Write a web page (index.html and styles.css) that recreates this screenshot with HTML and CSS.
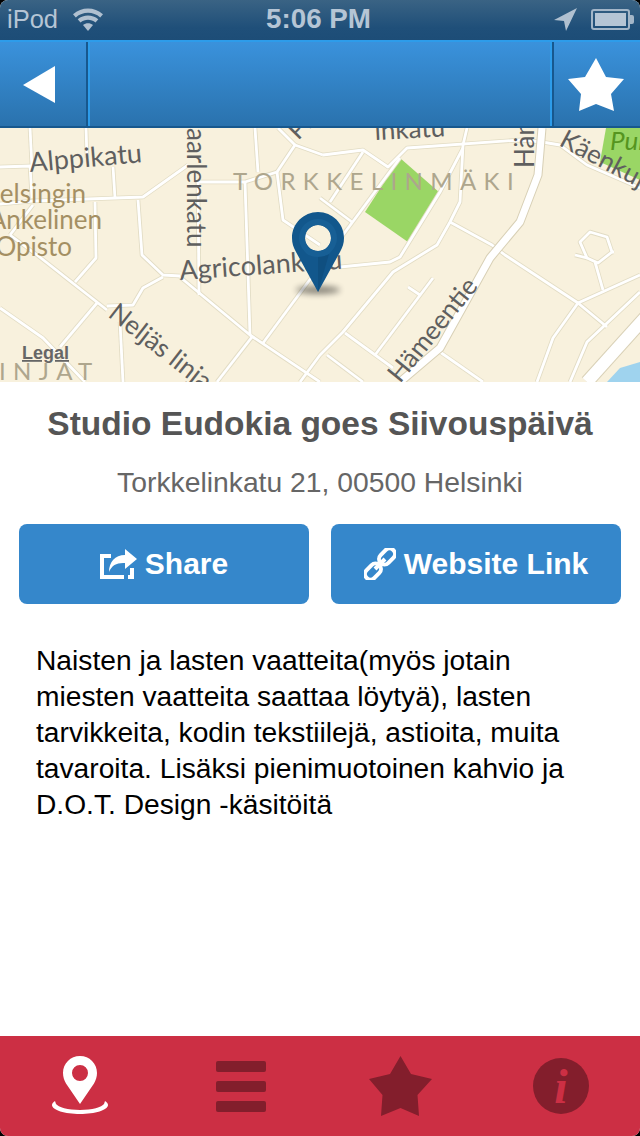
FILE: index.html
```html
<!DOCTYPE html>
<html lang="fi">
<head>
<meta charset="utf-8">
<title>Studio Eudokia goes Siivouspäivä</title>
<link rel="stylesheet" href="styles.css">
</head>
<body>
<div class="screen">
  <header class="status">
    <div class="status-left">
      <span>iPod</span>
      <svg class="wifi" viewBox="0 0 30 23" width="30" height="23"><path d="M15 23l-5-6c3-2.400 7-2.400 10 0z"/><path d="M7.500 14.500l-2.800-3.200c6-5 14.600-5 20.600 0l-2.800 3.200c-4.400-3.600-10.600-3.600-15 0z"/><path d="M2.800 9.500L0 6.300c8.600-7.800 21.400-7.800 30 0l-2.800 3.200c-7-6.200-17.400-6.200-24.400 0z"/></svg>
    </div>
    <span class="time">5:06 PM</span>
    <div class="status-right">
      <svg class="arrow" viewBox="0 0 23 23" width="23" height="23"><path d="M23 0L0 12l10 1 2 10z"/></svg>
      <div class="battery"><div class="battery-fill"></div></div>
      <div class="battery-nib"></div>
    </div>
  </header>

  <nav class="navbar">
    <button class="nav-btn back" aria-label="Back">
      <svg viewBox="0 0 32 37" width="32" height="37"><path d="M32 0v37L0 19z"/></svg>
    </button>
    <div class="nav-title"></div>
    <button class="nav-btn fav" aria-label="Favourite">
      <svg viewBox="0 0 56 53" width="56" height="53"><path d="M28 0l10 19 18 2-13 15 3 17-18-7-17 7 2-17L0 21l17-2z"/></svg>
    </button>
  </nav>

  <svg class="map" viewBox="0 0 640 254" width="640" height="254" role="img">
    <defs>
      <g id="roads">
        <polyline points="0,39 30,38 32,70"/>
        <polyline points="30,0 32,40"/>
        <polyline points="86,0 87,30"/>
        <polyline points="0,76 33,73 143,69 188,37"/>
        <polyline points="113,39 115,70"/>
        <polyline points="95,74 96,130 75,154"/>
        <polyline points="138,72 142,127 163,147 180,148"/>
        <polyline points="163,149 143,160 133,177 107,178"/>
        <polyline points="10,107 37,127 107,182"/>
        <polyline points="180,149 250,207 320,254"/>
        <polyline points="198,54 199,167"/>
        <polyline points="198,54 245,54 277,44"/>
        <polyline points="245,54 250,207"/>
        <polyline points="277,44 283,92 320,117"/>
        <polyline points="255,0 258,44"/>
        <polyline points="277,44 295,17 323,27"/>
        <polyline points="278,0 295,17"/>
        <polyline points="263,215 400,30"/>
        <polyline points="252,209 217,254"/>
        <polyline points="0,180 43,210 85,254"/>
        <polyline points="97,175 60,219"/>
        <polyline points="120,194 123,254"/>
        <polyline points="33,77 10,107"/>
        <polyline points="323,27 363,22 388,39 407,20 520,12 542,14 560,17 587,37 640,60"/>
        <polyline points="363,24 330,74"/>
        <polyline points="467,0 463,17 460,74 450,94 437,117 393,144 343,204 320,227 300,254"/>
        <polyline points="463,20 440,64 400,129 390,134 340,139"/>
        <polyline points="450,94 492,117 505,127 578,175 607,199"/>
        <polyline points="578,175 553,210 537,254"/>
        <polyline points="578,175 640,147"/>
        <polyline points="603,162 595,134"/>
        <polygon points="590,104 607,109 612,124 598,135 587,130 580,114"/>
        <polyline points="575,127 587,130"/>
        <polyline points="612,124 614,124"/>
        <polyline points="433,150 375,227"/>
        <polyline points="408,159 420,167"/>
        <polyline points="345,205 393,240"/>
        <polyline points="327,227 363,254"/>
        <polyline points="440,224 483,254"/>
        <polyline points="640,164 587,214 570,254"/>
        <polyline points="320,70 352,94"/>
      </g>
    </defs>
    <rect class="land" width="640" height="254"/>
    <polygon class="park" points="400,30 440,65 408,114 365,84"/>
    <polygon class="park" points="606,0 640,0 640,52 600,34"/>
    <polygon class="water" points="607,254 620,240 640,234 640,254"/>
    <use href="#roads" class="casing"/>
    <use href="#roads" class="road"/>
    <polyline class="major-case" points="542,0 538,47 520,94 490,130 440,220 400,254"/>
    <polyline class="major" points="542,0 538,47 520,94 490,130 440,220 400,254"/>
    <polyline class="major-case wide" points="650,184 587,254"/>
    <polyline class="major wide" points="650,184 587,254"/>

    <text class="district" x="233" y="62">TORKKELINMÄKI</text>
    <text class="district" x="-1" y="252">INJAT</text>
    <text class="street" transform="translate(30 44) rotate(-5)">Alppikatu</text>
    <text class="poi" x="86" y="75" text-anchor="end">Helsingin</text>
    <text class="poi" x="102" y="101" text-anchor="end">Ankelinen</text>
    <text class="poi" x="72" y="128" text-anchor="end">Opisto</text>
    <text class="street-sm" transform="translate(187 0) rotate(90)">aarlenkatu</text>
    <text class="street" transform="translate(180 152) rotate(-4)">Agricolankatu</text>
    <text class="street-sm" transform="translate(107 188) rotate(38)">Neljäs linja</text>
    <text class="street-sm" transform="translate(400 256) rotate(-51)">Hämeentie</text>
    <text class="street-sm" transform="translate(534 40) rotate(-90)">Häm</text>
    <text class="street-sm" transform="translate(558 17) rotate(28)">Käenkuja</text>
    <text class="street-sm" transform="translate(298 13) rotate(-45)">Pi</text>
    <text class="street-sm" transform="translate(375 12) rotate(-3)">inkatu</text>
    <text class="park-label" x="610" y="22">Puisto</text>
    <text class="legal" x="22" y="231">Legal</text>

    <ellipse class="pin-shadow" cx="318" cy="162" rx="22" ry="4"/>
    <path class="pin-outer" fill-rule="evenodd" d="M318 84c14.400 0 26 11.600 26 26 0 5-1.400 9.400-4 14l-22 40-22-40c-2.600-4.600-4-9-4-14 0-14.400 11.600-26 26-26zm0 13a13 13 0 1 0 0 26 13 13 0 0 0 0-26z"/>
    <path class="pin-inner" fill-rule="evenodd" d="M318 91a19 19 0 0 1 19 19c0 7-4 12-8 16-3 2-7 3-11 3s-8-1-11-3c-4-4-8-9-8-16a19 19 0 0 1 19-19zm0 6a13 13 0 1 0 0 26 13 13 0 0 0 0-26z"/>
    <path class="pin-tip" d="M318 129c4 0 8-1 11-3l-11 38z"/>
  </svg>

  <main class="details">
    <h1 class="title">Studio Eudokia goes Siivouspäivä</h1>
    <p class="address">Torkkelinkatu 21, 00500 Helsinki</p>
    <div class="actions">
      <a class="action">
        <svg viewBox="0 0 37 30" width="37" height="30"><path class="stroke-icon" d="M24 28H2V7h9M32 19v9h-4"/><path d="M25 0l12 10-12 10v-6c-8-.500-13 2-16 9 0-10 6-17 16-17z"/></svg>
        <span>Share</span>
      </a>
      <a class="action">
        <svg viewBox="0 0 32 32" width="32" height="32"><g class="stroke-icon"><rect x="14" y="3" width="18" height="11" rx="5.500" transform="rotate(-45 23 8.500)"/><rect x="0" y="18" width="18" height="11" rx="5.500" transform="rotate(-45 9 23.500)"/><path d="M11 21l10-10"/></g></svg>
        <span>Website Link</span>
      </a>
    </div>
    <p class="description">Naisten ja lasten vaatteita(myös jotain miesten vaatteita saattaa löytyä), lasten tarvikkeita, kodin tekstiilejä, astioita, muita tavaroita. Lisäksi pienimuotoinen kahvio ja D.O.T. Design -käsitöitä</p>
  </main>

  <footer class="tabbar">
    <div class="tab">
      <svg class="tab-active" viewBox="0 0 56 60" width="56" height="60"><path fill-rule="evenodd" d="M28 0c9.500 0 17 7.500 17 17 0 4-1.200 7-3 10.500L28 48 14 27.500C12.200 24 11 21 11 17 11 7.500 18.500 0 28 0zm0 9a8 8 0 1 0 0 16 8 8 0 0 0 0-16z"/><path d="M3 45c-2 1-3 3-3 4 0 5 13 9 28 9s28-4 28-9c0-1-1-3-3-4l-1 3c-2 3-12 6-24 6s-22-3-24-6z"/></svg>
    </div>
    <div class="tab">
      <div class="menu-icon"><i></i><i></i><i></i></div>
    </div>
    <div class="tab">
      <svg class="tab-dim" viewBox="0 0 63 60" width="63" height="60"><path d="M31.500 0l10.500 18 21 5-14.500 16L50 60l-18.500-8L12 60l1.500-21L0 23l21-5z"/></svg>
    </div>
    <div class="tab">
      <div class="info-icon">i</div>
    </div>
  </footer>
</div>
</body>
</html>
```

FILE: styles.css
```css
* { box-sizing: border-box; }
html, body { margin: 0; padding: 0; background: #000; }
.screen {
  width: 640px;
  height: 1136px;
  display: flex;
  flex-direction: column;
  overflow: hidden;
  border-radius: 8px;
  background: #fff;
  font-family: "Liberation Sans", Arial, sans-serif;
}

/* status bar */
.status {
  height: 40px;
  display: grid;
  grid-template-columns: 1fr auto 1fr;
  align-items: center;
  padding: 0 6px 2px 7px;
  background: linear-gradient(#3a6384, #1f4f79 70%, #1d4d77);
  color: #b5c5d5;
  font-size: 25.500px;
}
.status-left { display: flex; align-items: center; gap: 15px; }
.wifi, .arrow { fill: #b0c0d0; display: block; }
.time { font-weight: bold; font-size: 27.800px; padding-right: 4px; }
.status-right { display: flex; align-items: center; justify-content: flex-end; }
.arrow { margin-right: 14px; }
.battery {
  width: 39px;
  height: 21px;
  border: 2px solid #a3b6c8;
  border-radius: 3px;
  padding: 2px;
}
.battery-fill { height: 100%; background: #b5c5d5; }
.battery-nib { width: 4px; height: 9px; background: #a3b6c8; border-radius: 0 2px 2px 0; }

/* navigation bar */
.navbar {
  height: 88px;
  display: flex;
  background: linear-gradient(#3a92dc, #2a72ad);
  border-top: 2px solid #2d9cea;
  border-bottom: 2px solid #17588e;
}
.nav-btn {
  border: 0;
  background: none;
  padding: 0;
  display: flex;
  align-items: center;
  flex: none;
}
.nav-btn svg { fill: #fff; display: block; }
.back {
  width: 90px;
  padding-left: 23px;
  border-right: 2px solid #2d9cea;
  box-shadow: inset -2px 0 0 #17588e;
}
.fav {
  width: 90px;
  padding-left: 16px;
  border-left: 2px solid #2d9cea;
  box-shadow: inset 2px 0 0 #17588e;
}
.nav-title { flex: 1; }

/* map */
.map { display: block; flex: none; }
.land { fill: #f8f1dd; }
.park { fill: #9ad665; }
.water { fill: #9fd3ee; }
.casing { fill: none; stroke: #e2dcc4; stroke-width: 4.500px; stroke-linejoin: round; }
.road { fill: none; stroke: #fff; stroke-width: 2.800px; stroke-linejoin: round; }
.major-case { fill: none; stroke: #d8d0b6; stroke-width: 9px; stroke-linejoin: round; }
.major { fill: none; stroke: #fff; stroke-width: 7px; stroke-linejoin: round; }
.major-case.wide { stroke-width: 14px; }
.major.wide { stroke-width: 12px; }
.street { font: 27px Lato, sans-serif; fill: #5f5f5f; }
.street-sm { font: 26px Lato, sans-serif; fill: #5f5f5f; }
.poi { font: 26px Lato, sans-serif; fill: #a48f63; }
.district { font: 24px Lato, sans-serif; fill: #aea68d; letter-spacing: 7.400px; }
.park-label { font: italic 26px Lato, sans-serif; fill: #55951f; }
.legal {
  font: bold 18px "Liberation Sans", sans-serif;
  fill: #666;
  text-decoration: underline;
}
.pin-shadow { fill: #000; opacity: .45; filter: blur(3px); }
.pin-outer { fill: #12578c; }
.pin-inner { fill: #175f95; }
.pin-tip { fill: #0f4f80; }

/* details */
.details { flex: 1; display: flex; flex-direction: column; padding-top: 22px; }
.title {
  margin: 0;
  text-align: center;
  font-size: 33.500px;
  line-height: 40px;
  font-weight: bold;
  color: #555;
}
.address {
  margin: 20px 0 0;
  text-align: center;
  font-size: 28.300px;
  line-height: 36px;
  color: #666;
}
.actions {
  display: flex;
  gap: 22px;
  margin: 24px 19px 0;
}
.action {
  flex: 1;
  height: 80px;
  display: flex;
  align-items: center;
  justify-content: center;
  gap: 8px;
  border-radius: 8px;
  background: #3587cb;
  color: #fff;
  font-size: 30px;
  font-weight: bold;
}
.action svg { fill: #fff; display: block; flex: none; }
.stroke-icon { fill: none; stroke: #fff; stroke-width: 4px; }
.description {
  margin: 38px 64px 0 36px;
  font-size: 28.200px;
  line-height: 36px;
  color: #000;
}

/* tab bar */
.tabbar {
  height: 100px;
  flex: none;
  display: grid;
  grid-template-columns: repeat(4, 160px);
  background: #cc2f44;
}
.tab { display: flex; align-items: center; justify-content: center; }
.tab-active { fill: #fff; display: block; }
.tab-dim { fill: #831e2c; display: block; }
.menu-icon {
  width: 50px;
  margin-left: 2px;
  display: flex;
  flex-direction: column;
  gap: 9px;
}
.menu-icon i { display: block; height: 11px; border-radius: 2px; background: #831e2c; }
.info-icon {
  width: 56px;
  height: 56px;
  margin-left: 2px;
  border-radius: 50%;
  background: #831e2c;
  color: #cc2f44;
  display: flex;
  align-items: center;
  justify-content: center;
  font: italic bold 48px "Liberation Serif", serif;
}
```
